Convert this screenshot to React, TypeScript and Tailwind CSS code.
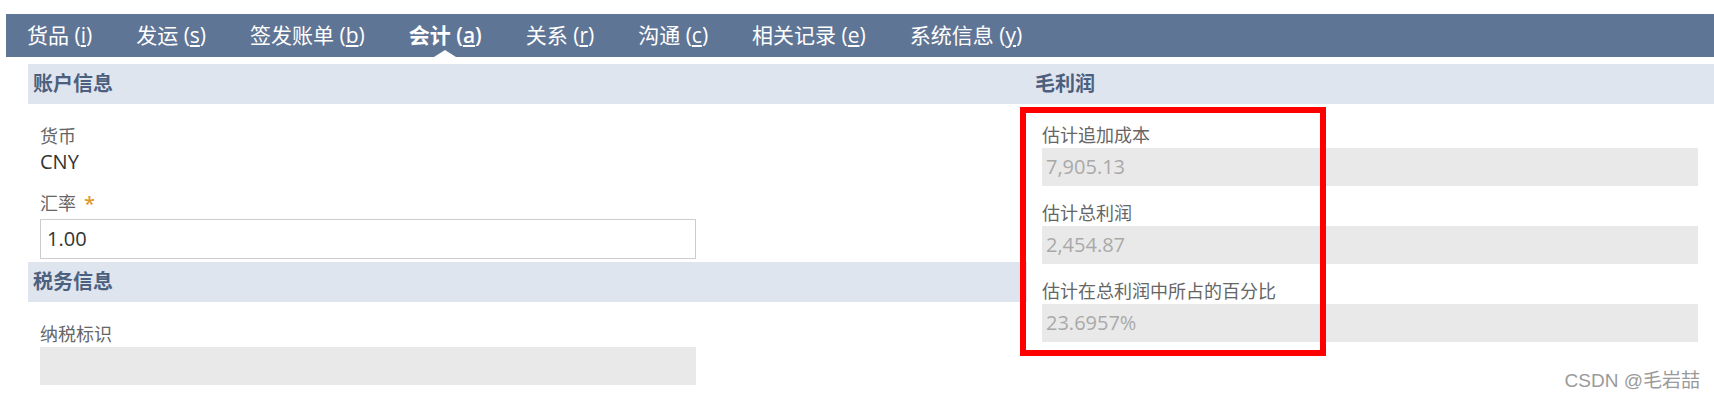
import React from "react";

const tabs = [
  { name: "货品", key: "i" },
  { name: "发运", key: "s" },
  { name: "签发账单", key: "b" },
  { name: "会计", key: "a", active: true },
  { name: "关系", key: "r" },
  { name: "沟通", key: "c" },
  { name: "相关记录", key: "e" },
  { name: "系统信息", key: "y" },
];

const font = { fontFamily: '"Open Sans", "Noto Sans CJK SC", sans-serif' };

const SectionHeader = ({ title, pad }: { title: string; pad: string }) => (
  <div className={`flex h-[40px] items-center bg-[#dfe5ef] ${pad}`}>
    <span className="text-[20px] font-semibold text-[#4c607e]">{title}</span>
  </div>
);

const ReadonlyField = ({ label, value }: { label: string; value?: string }) => (
  <div className="flex flex-col">
    <div className="h-[25px] text-[18px] leading-[25px] text-[#666]">{label}</div>
    <div className="flex h-[38px] w-[656px] items-center bg-[#e9e9e9] px-[4px] text-[20px] text-[#a9a9a9]">
      {value}
    </div>
  </div>
);

export default function App() {
  return (
    <div className="relative h-[400px] w-full bg-white pt-[14px]" style={font}>
      <div className="ml-[6px] flex h-[43px] items-center bg-[#5f7596] pl-[21px]">
        {tabs.map((t) => (
          <div
            key={t.key}
            className={`relative mr-[44px] flex h-full items-center text-[21px] text-white ${
              t.active ? "font-semibold" : ""
            }`}
          >
            <span>
              {t.name} (<span className="underline underline-offset-2">{t.key}</span>)
            </span>
            {t.active && (
              <div className="absolute bottom-0 left-1/2 h-0 w-0 -translate-x-1/2 border-x-[11px] border-b-[7px] border-x-transparent border-b-white" />
            )}
          </div>
        ))}
      </div>

      <div className="ml-[28px] mt-[7px] flex">
        <div className="flex w-[999px] flex-col">
          <SectionHeader title="账户信息" pad="pl-[5px]" />
          <div className="flex flex-col px-[12px] pt-[20px]">
            <div className="h-[25px] text-[18px] leading-[25px] text-[#666]">货币</div>
            <div className="h-[25px] text-[20px] leading-[25px] text-[#333]">CNY</div>
            <div className="mt-[17px] flex h-[25px] items-center gap-[8px] text-[18px] leading-[25px] text-[#666]">
              汇率 <span className="text-[20px] font-semibold text-[#e39a2c]">*</span>
            </div>
            <div className="mt-[3px] flex h-[40px] w-[656px] items-center border border-[#cccccc] px-[6px] text-[20px] text-[#333]">
              1.00
            </div>
          </div>
          <div className="mt-[3px]">
            <SectionHeader title="税务信息" pad="pl-[5px]" />
          </div>
          <div className="flex flex-col px-[12px] pt-[20px]">
            <ReadonlyField label="纳税标识" />
          </div>
        </div>

        <div className="flex flex-1 flex-col">
          <SectionHeader title="毛利润" pad="pl-[8px]" />
          <div className="flex flex-col gap-[15px] pl-[15px] pt-[19px]">
            <ReadonlyField label="估计追加成本" value="7,905.13" />
            <ReadonlyField label="估计总利润" value="2,454.87" />
            <ReadonlyField label="估计在总利润中所占的百分比" value="23.6957%" />
          </div>
        </div>
      </div>

      <div className="pointer-events-none absolute left-[1020px] top-[107px] h-[249px] w-[306px] border-[6px] border-[#ff0000]" />

      <div
        className="absolute right-[14px] top-[367px] text-[19px] text-[#9a9a9a]"
        style={{ fontFamily: '"Liberation Sans", "Noto Sans CJK SC", sans-serif' }}
      >
        CSDN @毛岩喆
      </div>
    </div>
  );
}
